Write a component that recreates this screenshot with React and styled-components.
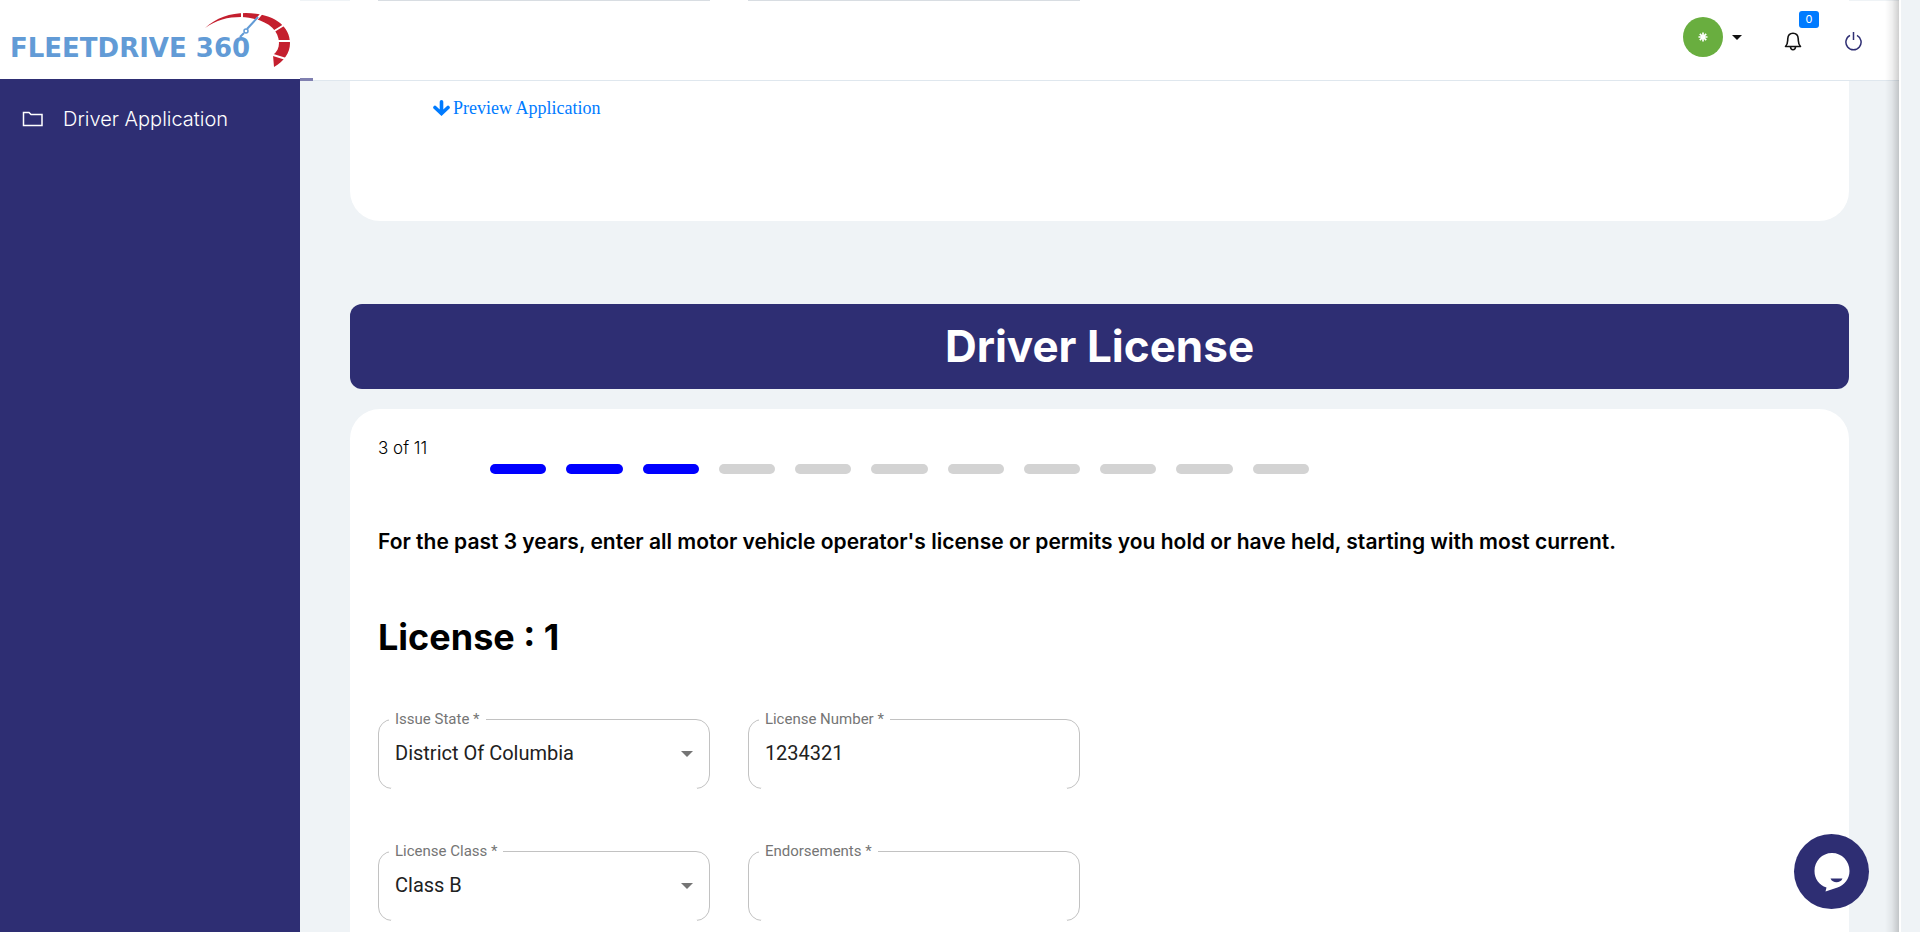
import React from "react";
import styled, { createGlobalStyle } from "styled-components";

const Global = createGlobalStyle`
  * { box-sizing: border-box; }
  body { margin: 0; background: #eff3f6; font-family: Inter, "Liberation Sans", sans-serif; color: #000; }
  h1, h2, p { margin: 0; }
  button { font: inherit; border: 0; background: none; padding: 0; cursor: pointer; }
`;

const Shell = styled.div`
  display: flex;
  height: 100vh;
  overflow: hidden;
`;

const Sidebar = styled.aside`
  flex: 0 0 300px;
  background: #2e2e73;
`;

const Brand = styled.a`
  position: relative;
  display: flex;
  align-items: center;
  height: 79px;
  padding: 17px 12px 0 10px;
  background: #fff;
  color: #629bd6;
  font: 700 26px/32px "DejaVu Sans", sans-serif;
  white-space: nowrap;
  text-decoration: none;
`;

const Gauge = styled.svg`
  position: absolute;
  left: 196px;
  top: 5px;
`;

const NavLink = styled.a`
  display: flex;
  align-items: center;
  gap: 20px;
  height: 80px;
  padding-left: 22px;
  color: #fff;
  font-size: 20px;
  font-weight: 300;
  text-decoration: none;
`;

const Main = styled.div`
  position: relative;
  flex: 1;
  min-width: 0;
  overflow: hidden;
  border-right: 2px solid #fff;
`;

const Gutter = styled.div`
  flex: 0 0 19px;
`;

const Header = styled.header`
  position: absolute;
  z-index: 1;
  top: 1px;
  left: 0;
  right: 0;
  display: flex;
  justify-content: flex-end;
  height: 80px;
  padding: 12px 36px 0 0;
  background: #fff;
  border-bottom: 1px solid #dfe7ee;
`;

const LoadMark = styled.span`
  position: absolute;
  left: 0;
  bottom: -1px;
  width: 13px;
  height: 3px;
  background: #8080b0;
`;

const UserButton = styled.button`
  display: flex;
  align-items: center;
  gap: 9px;
  height: 48px;
  margin-right: 41px;
`;

const Avatar = styled.span`
  display: grid;
  place-items: center;
  width: 40px;
  height: 40px;
  border-radius: 50%;
  background: #69ae3f;
`;

const IconButton = styled.button`
  position: relative;
  display: grid;
  place-items: center;
  width: 20px;
  height: 56px;
  margin-right: ${(p) => p.$gap || 0}px;
`;

const Badge = styled.span`
  position: absolute;
  left: 16px;
  top: -2px;
  width: 20px;
  height: 17px;
  border-radius: 3px;
  background: #007bff;
  color: #fff;
  font-size: 11px;
  line-height: 17px;
  text-align: center;
`;

const EdgeShade = styled.div`
  position: absolute;
  z-index: 2;
  top: 0;
  right: 0;
  bottom: 0;
  width: 14px;
  background: linear-gradient(to right, rgba(0, 0, 0, 0), rgba(0, 0, 0, 0.06) 50%, rgba(0, 0, 0, 0.19));
`;

const Content = styled.main`
  padding: 0 50px;
`;

const PreviewCard = styled.section`
  height: 221px;
  padding: 0 28px;
  border-radius: 0 0 30px 30px;
  background: #fff;
`;

const Columns = styled.div`
  display: grid;
  grid-template-columns: repeat(2, 23%);
  column-gap: 38px;
`;

const FieldEdge = styled.div`
  height: 1px;
  background: #d8dde2;
`;

const PreviewLink = styled.a`
  display: inline-flex;
  align-items: center;
  gap: 3px;
  margin: 94px 0 0 55px;
  color: #007bff;
  font: 18px/26px "Liberation Serif", serif;
  text-decoration: none;
`;

const Banner = styled.h1`
  margin: 83px 0 20px;
  border-radius: 12px;
  background: #2e2e73;
  color: #fff;
  font-size: 44px;
  font-weight: 700;
  line-height: 85px;
  text-align: center;
`;

const FormCard = styled.section`
  min-height: 600px;
  padding: 28px;
  border-radius: 30px 30px 0 0;
  background: #fff;
`;

const Progress = styled.div`
  display: flex;
  align-items: flex-end;
  height: 37px;
`;

const StepText = styled.p`
  align-self: flex-start;
  width: 112px;
  font-size: 17px;
  font-weight: 300;
  line-height: 22px;
`;

const Steps = styled.div`
  display: flex;
  flex: 1;
  gap: 20px;
  max-width: 819px;
`;

const Step = styled.span`
  flex: 1;
  height: 10px;
  border-radius: 5px;
  background: ${(p) => (p.$done ? "#0000ff" : "#d3d3d3")};
`;

const Intro = styled.p`
  margin-top: 54px;
  font-size: 21px;
  font-weight: 600;
  line-height: 28px;
`;

const LicenseTitle = styled.h2`
  margin: 56px 0 57px;
  font-size: 36px;
  font-weight: 700;
  line-height: 50px;
`;

const Fields = styled(Columns)`
  row-gap: 62px;
`;

const FieldBox = styled.div`
  position: relative;
  height: 70px;
  border: 1px solid #c2c2c2;
  border-radius: 14px;
  font-family: Roboto, sans-serif;

  &::after {
    content: "";
    position: absolute;
    left: 12px;
    right: 12px;
    bottom: -1px;
    height: 1px;
    background: #fff;
  }
`;

const FieldLabel = styled.label`
  position: absolute;
  left: 10px;
  top: -10px;
  padding: 0 6px;
  background: #fff;
  color: #757575;
  font-size: 15px;
  line-height: 18px;
`;

const control = `
  display: block;
  width: 100%;
  height: 100%;
  padding: 0 16px 2px;
  border: 0;
  outline: 0;
  appearance: none;
  background: transparent;
  color: #212121;
  font: 20px/24px Roboto, sans-serif;
`;

const TextInput = styled.input`${control}`;
const Select = styled.select`${control}`;

const Arrow = styled.svg`
  position: absolute;
  right: 16px;
  top: 31px;
  pointer-events: none;
`;

const ChatButton = styled.button`
  position: absolute;
  z-index: 3;
  right: 30px;
  bottom: 23px;
  width: 75px;
  height: 75px;
  border-radius: 50%;
  background: #2e2e73;
`;

function SelectField({ id, label, value }) {
  return (
    <FieldBox>
      <Select id={id} defaultValue={value}>
        <option>{value}</option>
      </Select>
      <FieldLabel htmlFor={id}>{label} *</FieldLabel>
      <Arrow width="12" height="6" viewBox="0 0 12 6" aria-hidden="true">
        <path d="M0 0h12L6 6z" fill="#757575" />
      </Arrow>
    </FieldBox>
  );
}

function TextField({ id, label, value }) {
  return (
    <FieldBox>
      <TextInput id={id} defaultValue={value} />
      <FieldLabel htmlFor={id}>{label} *</FieldLabel>
    </FieldBox>
  );
}

const TOTAL_STEPS = 11;
const CURRENT_STEP = 3;

export default function App() {
  return (
    <>
      <Global />
      <Shell>
        <Sidebar>
          <Brand href="#">
            FLEETDRIVE 360
            <Gauge width="100" height="70" viewBox="0 0 100 70" aria-hidden="true">
              <path d="M9 23C20 13 34 8 50 8C76 8 94 20 94 38C94 48 88 56 78 62L77 50C81 47 83 43 83 38C83 23 68 13 45 12C32 12 20 15 9 23z" fill="#c41f2e" />
              <path d="M46 6v10M66 8l-9 11M88 20l-13 8M96 36H80M90 54l-16-5" stroke="#fff" strokeWidth="2" fill="none" />
              <path d="M62 12L51 24M48 28l-4 4" stroke="#629bd6" strokeWidth="2" fill="none" />
              <circle cx="50" cy="26" r="2" stroke="#629bd6" strokeWidth="1.5" fill="#fff" />
            </Gauge>
          </Brand>
          <nav>
            <NavLink href="#">
              <svg width="21" height="16" viewBox="0 0 21 16" fill="none" stroke="#fff" strokeWidth="1.5" aria-hidden="true">
                <path d="M1.5 1.5H7l2 2h11v11h-18.500z" />
              </svg>
              Driver Application
            </NavLink>
          </nav>
        </Sidebar>
        <Main>
          <Header>
            <LoadMark />
            <UserButton aria-label="Account">
              <Avatar>
                <svg width="10" height="10" viewBox="0 0 10 10" stroke="#fff" strokeWidth="1.7" aria-hidden="true">
                  <path d="M5 0.500v9M0.500 5h9M1.800 1.800l6.400 6.400M8.200 1.800L1.800 8.200" />
                </svg>
              </Avatar>
              <svg width="10" height="5" viewBox="0 0 10 5" aria-hidden="true">
                <path d="M0 0h10L5 5z" fill="#111" />
              </svg>
            </UserButton>
            <IconButton $gap={40} aria-label="Notifications">
              <svg width="18" height="19" viewBox="0 0 18 19" fill="none" stroke="#111" strokeWidth="1.6" strokeLinejoin="round" aria-hidden="true">
                <path d="M1.500 14.500C4 12 3.500 10 3.800 6.500C4 3 6.200 1.200 9 1.200S14 3 14.200 6.500C14.500 10 14 12 16.500 14.500z" />
                <path d="M6.500 15c.3 3.600 4.700 3.600 5 0" />
              </svg>
              <Badge>0</Badge>
            </IconButton>
            <IconButton aria-label="Log out">
              <svg width="17" height="19" viewBox="0 0 17 19" fill="none" stroke="#2e2e73" strokeWidth="1.5" aria-hidden="true">
                <path d="M8.500 0v8M5 3.400a7.600 7.600 0 1 0 7 0" />
              </svg>
            </IconButton>
          </Header>
          <Content>
            <PreviewCard>
              <Columns>
                <FieldEdge />
                <FieldEdge />
              </Columns>
              <PreviewLink href="#">
                <svg width="17" height="16" viewBox="0 0 17 16" fill="none" stroke="#007bff" strokeWidth="3.600" strokeLinecap="round" aria-hidden="true">
                  <path d="M8.500 1.800v11M2 7.500l6.500 6L15 7.500" />
                </svg>
                Preview Application
              </PreviewLink>
            </PreviewCard>
            <Banner>Driver License</Banner>
            <FormCard>
              <Progress>
                <StepText>3 of 11</StepText>
                <Steps>
                  {Array.from({ length: TOTAL_STEPS }, (_, i) => (
                    <Step key={i} $done={i < CURRENT_STEP} />
                  ))}
                </Steps>
              </Progress>
              <Intro>
                For the past 3 years, enter all motor vehicle operator's license or permits you hold or have held, starting with most current.
              </Intro>
              <LicenseTitle>License : 1</LicenseTitle>
              <Fields>
                <SelectField id="state" label="Issue State" value="District Of Columbia" />
                <TextField id="number" label="License Number" value="1234321" />
                <SelectField id="class" label="License Class" value="Class B" />
                <TextField id="endorsements" label="Endorsements" value="" />
              </Fields>
            </FormCard>
          </Content>
          <EdgeShade />
          <ChatButton aria-label="Open chat">
            <svg width="75" height="75" viewBox="0 0 75 75" aria-hidden="true">
              <path d="M38 19c10 0 17.500 8 17.500 18c0 8-5 14-12 16.500L31.500 57.500l1-4C25 51 20.500 45 20.500 37C20.500 27 28 19 38 19z" fill="#fff" />
              <path d="M36.500 44.500h12c-2 5-10 5-12 0z" fill="#2e2e73" />
            </svg>
          </ChatButton>
        </Main>
        <Gutter />
      </Shell>
    </>
  );
}
